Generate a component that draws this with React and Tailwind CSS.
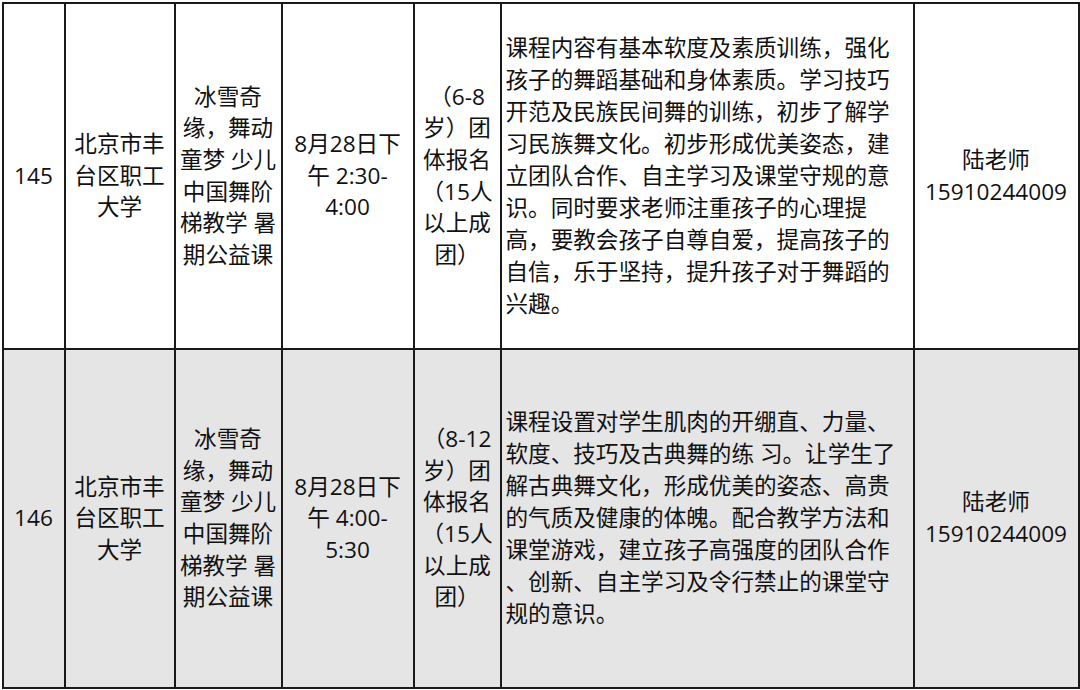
const rows = [
  {
    id: '145',
    bg: 'bg-white',
    h: 'h-[346px]',
    org: ['北京市丰', '台区职工', '大学'],
    name: ['冰雪奇', '缘，舞动', '童梦 少儿', '中国舞阶', '梯教学 暑', '期公益课'],
    time: ['8月28日下', '午 2:30-', '4:00'],
    age: ['（6-8', '岁）团', '体报名', '（15人', '以上成', '团）'],
    desc: [
      '课程内容有基本软度及素质训练，强化',
      '孩子的舞蹈基础和身体素质。学习技巧',
      '开范及民族民间舞的训练，初步了解学',
      '习民族舞文化。初步形成优美姿态，建',
      '立团队合作、自主学习及课堂守规的意',
      '识。同时要求老师注重孩子的心理提',
      '高，要教会孩子自尊自爱，提高孩子的',
      '自信，乐于坚持，提升孩子对于舞蹈的',
      '兴趣。',
    ],
  },
  {
    id: '146',
    bg: 'bg-[#e5e5e5]',
    h: 'h-[339px]',
    org: ['北京市丰', '台区职工', '大学'],
    name: ['冰雪奇', '缘，舞动', '童梦 少儿', '中国舞阶', '梯教学 暑', '期公益课'],
    time: ['8月28日下', '午 4:00-', '5:30'],
    age: ['（8-12', '岁）团', '体报名', '（15人', '以上成', '团）'],
    desc: [
      '课程设置对学生肌肉的开绷直、力量、',
      '软度、技巧及古典舞的练 习。让学生了',
      '解古典舞文化，形成优美的姿态、高贵',
      '的气质及健康的体魄。配合教学方法和',
      '课堂游戏，建立孩子高强度的团队合作',
      '、创新、自主学习及令行禁止的课堂守',
      '规的意识。',
    ],
  },
];

function Lines({ items }) {
  return items.map((t, i) => (
    <div key={i} className="whitespace-nowrap">
      {t}
    </div>
  ));
}

export default function App() {
  const cell = 'border-2 border-[#1a1a1a] align-middle text-center p-0';
  return (
    <div
      className="w-[1080px] h-[690px] bg-white pt-[1.5px] pl-[1.5px] text-[#111] text-[22.6px] leading-[31.6px]"
      style={{ fontFamily: '"Open Sans", "Noto Sans CJK SC", sans-serif' }}
    >
      <table className="table-fixed border-collapse w-[1076px]">
        <colgroup>
          <col className="w-[62px]" />
          <col className="w-[110px]" />
          <col className="w-[107px]" />
          <col className="w-[132px]" />
          <col className="w-[87px]" />
          <col className="w-[413px]" />
          <col className="w-[165px]" />
        </colgroup>
        <tbody>
          {rows.map((r) => (
            <tr key={r.id} className={`${r.bg} ${r.h}`}>
              <td className={cell}>{r.id}</td>
              <td className={cell}>
                <Lines items={r.org} />
              </td>
              <td className={cell}>
                <Lines items={r.name} />
              </td>
              <td className={cell}>
                <Lines items={r.time} />
              </td>
              <td className={cell}>
                <Lines items={r.age} />
              </td>
              <td className={`${cell} !text-left pl-[4px] leading-[32px]`}>
                <Lines items={r.desc} />
              </td>
              <td className={cell}>
                <div>陆老师</div>
                <div>15910244009</div>
              </td>
            </tr>
          ))}
        </tbody>
      </table>
    </div>
  );
}
